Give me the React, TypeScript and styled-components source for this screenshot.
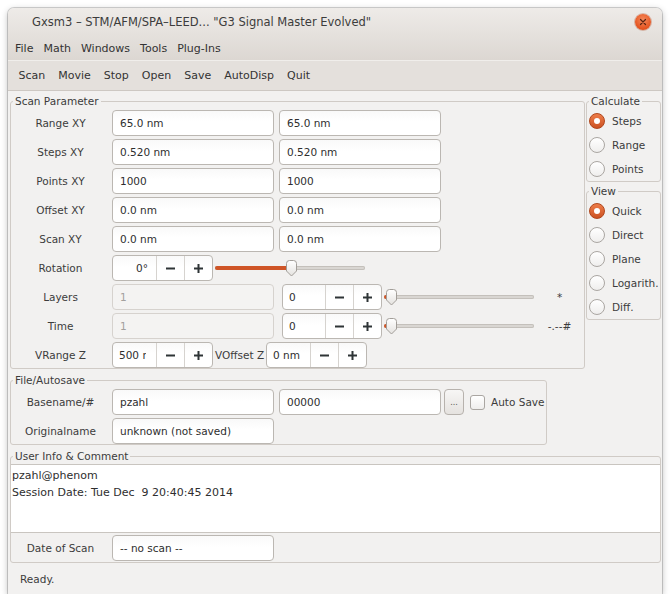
import React from "react";
import styled, { createGlobalStyle } from "styled-components";

const Global = createGlobalStyle`
  html, body { margin: 0; padding: 0; background: #ffffff; }
  body { font-family: "DejaVu Sans", "Liberation Sans", sans-serif; }
  * { box-sizing: border-box; }
`;

const Window = styled.div`
  margin: 8px 0 0 8px;
  width: 654px;
  height: 586px;
  display: flex;
  flex-direction: column;
  background: #f2f1f0;
  border-radius: 6px 6px 0 0;
  box-shadow: 0 0 0 1px rgba(0, 0, 0, 0.16), 0 2px 7px rgba(0, 0, 0, 0.28);
  overflow: hidden;
  color: #3c3c3c;
  font-size: 10.5px;
`;

const Chrome = styled.div`
  background: linear-gradient(to bottom, #eeebe8, #dcd7d2);
`;

const TitleBar = styled.div`
  height: 28px;
  display: flex;
  align-items: center;
  padding: 0 11px 0 24px;
  font-size: 11.5px;
  color: #3c3c3c;
`;

const Title = styled.div`
  flex: 1;
  white-space: pre;
`;

const CloseButton = styled.div`
  width: 16px;
  height: 16px;
  border-radius: 50%;
  background: radial-gradient(circle at 50% 35%, #f58a5c, #e4531f 70%, #cf4514);
  box-shadow: 0 0 0 1px rgba(170, 60, 20, 0.3);
  display: flex;
  align-items: center;
  justify-content: center;
`;

const MenuBar = styled.div`
  height: 24px;
  display: flex;
  align-items: center;
  padding-left: 2px;
  font-size: 11px;
  color: #333;
`;

const MenuItem = styled.div`
  padding: 0 5px;
`;

const ToolBar = styled.div`
  height: 31px;
  display: flex;
  align-items: center;
  padding-left: 4px;
  font-size: 11px;
  color: #333;
  background: #e4e0dc;
  border-top: 1px solid #f0eeeb;
  border-bottom: 1px solid #cdc8c3;
`;

const ToolItem = styled.div`
  padding: 0 6.5px;
`;

const Main = styled.div`
  display: grid;
  grid-template-columns: 575px 75px;
  column-gap: 1px;
  row-gap: 4px;
  align-content: start;
  padding: 3px 1px 0 2px;
`;

const Frame = styled.fieldset<{ $w?: number; $span?: boolean }>`
  margin: 0;
  padding: 0;
  min-width: 0;
  border: 1px solid #d0cbc6;
  border-radius: 3px;
  ${(p) => (p.$w ? `width: ${p.$w}px; justify-self: start;` : "")}
  ${(p) => (p.$span ? "grid-column: 1 / span 2;" : "")}
`;

const Legend = styled.legend`
  padding: 0 2px;
  margin-left: 2px;
  line-height: 14px;
  font-size: 10.5px;
  color: #3c3c3c;
`;

const Rows = styled.div<{ $gap: number; $pt: number; $pb?: number }>`
  display: flex;
  flex-direction: column;
  gap: ${(p) => p.$gap}px;
  padding-top: ${(p) => p.$pt}px;
  padding-bottom: ${(p) => p.$pb ?? 0}px;
`;

const Row = styled.div`
  height: 26px;
  display: flex;
  align-items: center;
  gap: 2px;
`;

const Label = styled.div`
  width: 99px;
  flex: none;
  text-align: center;
  white-space: nowrap;
`;

const Fields = styled.div<{ $gap: number }>`
  display: flex;
  align-items: center;
  gap: ${(p) => p.$gap}px;
`;

const Entry = styled.div<{ $w: number; $disabled?: boolean }>`
  width: ${(p) => p.$w}px;
  height: 26px;
  flex: none;
  border: 1px solid ${(p) => (p.$disabled ? "#d6d2ce" : "#bbb7b2")};
  border-radius: 4px;
  background: ${(p) => (p.$disabled ? "#f4f3f2" : "linear-gradient(#f9f9f9, #ffffff 45%)")};
  color: ${(p) => (p.$disabled ? "#a3a09d" : "#2e2e2e")};
  padding: 0 7px;
  display: flex;
  align-items: center;
  white-space: pre;
  overflow: hidden;
`;

const Spin = styled.div<{ $w: number }>`
  width: ${(p) => p.$w}px;
  height: 26px;
  flex: none;
  display: flex;
  border: 1px solid #bbb7b2;
  border-radius: 4px;
  overflow: hidden;
  background: linear-gradient(#f9f9f9, #ffffff 45%);
  color: #2e2e2e;
`;

const SpinValue = styled.div<{ $right?: boolean }>`
  flex: 1;
  min-width: 0;
  margin: ${(p) => (p.$right ? "0 8px 0 6px" : "0 10px 0 6px")};
  overflow: hidden;
  white-space: nowrap;
  display: flex;
  align-items: center;
  justify-content: ${(p) => (p.$right ? "flex-end" : "flex-start")};
`;

const SpinButton = styled.div`
  width: 28px;
  flex: none;
  border-left: 1px solid #d6d3cf;
  display: flex;
  align-items: center;
  justify-content: center;
`;

const SliderBox = styled.div<{ $w: number }>`
  position: relative;
  width: ${(p) => p.$w}px;
  height: 26px;
  flex: none;
  display: flex;
  align-items: center;
`;

const Track = styled.div`
  width: 100%;
  height: 4px;
  border-radius: 2px;
  background: #d9d6d2;
  box-shadow: inset 0 0 0 1px #c4c0bb;
  display: flex;
`;

const TrackFill = styled.div`
  height: 4px;
  border-radius: 2px;
  background: #cf5527;
`;

const Thumb = styled.svg`
  position: absolute;
  top: 5px;
`;

const Marker = styled.div`
  width: 47px;
  text-align: center;
  white-space: pre;
`;

const InlineLabel = styled.div`
  white-space: nowrap;
`;

const Side = styled.div`
  display: flex;
  flex-direction: column;
  gap: 2px;
`;

const RadioRow = styled.div`
  height: 24px;
  display: flex;
  align-items: center;
  gap: 7px;
  padding-left: 2px;
  white-space: nowrap;
`;

const RadioDot = styled.span<{ $on?: boolean }>`
  width: 16px;
  height: 16px;
  flex: none;
  border-radius: 50%;
  border: 1px solid ${(p) => (p.$on ? "#b0461c" : "#aaa6a2")};
  background: ${(p) => (p.$on ? "linear-gradient(#ee7d4a, #cc5222)" : "linear-gradient(#ffffff, #efeeed)")};
  display: flex;
  align-items: center;
  justify-content: center;
  &::after {
    content: "";
    width: 6px;
    height: 6px;
    border-radius: 50%;
    background: #ffffff;
    display: ${(p) => (p.$on ? "block" : "none")};
  }
`;

const BrowseButton = styled.div`
  width: 20px;
  height: 26px;
  flex: none;
  border: 1px solid #b7b2ad;
  border-radius: 4px;
  background: linear-gradient(#f7f6f5, #e5e2df);
  display: flex;
  align-items: flex-end;
  justify-content: center;
  padding-bottom: 7px;
  font-size: 8px;
  color: #555;
`;

const CheckBox = styled.span`
  width: 15px;
  height: 15px;
  flex: none;
  border: 1px solid #aaa6a2;
  border-radius: 3px;
  background: linear-gradient(#ffffff, #efeeed);
`;

const TextArea = styled.div`
  height: 69px;
  background: #ffffff;
  border-top: 1px solid #c9c5c0;
  border-bottom: 1px solid #c9c5c0;
  padding: 2px 1px;
  font-size: 11px;
  line-height: 17px;
  color: #2e2e2e;
  white-space: pre;
`;

const StatusBar = styled.div`
  height: 30px;
  margin-top: auto;
  display: flex;
  align-items: center;
  padding: 0 0 1px 12px;
`;

const Minus = () => (
  <svg width="9" height="9" viewBox="0 0 9 9">
    <rect x="0" y="3.5" width="9" height="2" fill="#2e3436" />
  </svg>
);

const Plus = () => (
  <svg width="9" height="9" viewBox="0 0 9 9">
    <rect x="0" y="3.5" width="9" height="2" fill="#2e3436" />
    <rect x="3.5" y="0" width="2" height="9" fill="#2e3436" />
  </svg>
);

const SpinBox = ({ w, value, right }: { w: number; value: string; right?: boolean }) => (
  <Spin $w={w}>
    <SpinValue $right={right}>{value}</SpinValue>
    <SpinButton>
      <Minus />
    </SpinButton>
    <SpinButton>
      <Plus />
    </SpinButton>
  </Spin>
);

const Slider = ({ w, pos }: { w: number; pos: number }) => (
  <SliderBox $w={w}>
    <Track>
      <TrackFill style={{ width: pos }} />
    </Track>
    <Thumb width="13" height="17" viewBox="0 0 13 17" style={{ left: pos - 6.5 }}>
      <defs>
        <linearGradient id="knobGrad" x1="0" y1="0" x2="0" y2="1">
          <stop offset="0" stopColor="#ffffff" />
          <stop offset="1" stopColor="#e4e2df" />
        </linearGradient>
      </defs>
      <path
        d="M1.5 3.5 Q1.5 0.5 4.5 0.5 H8.5 Q11.5 0.5 11.5 3.5 V11 L6.5 16 L1.5 11 Z"
        fill="url(#knobGrad)"
        stroke="#a29e99"
      />
    </Thumb>
  </SliderBox>
);

const Radio = ({ on, label }: { on?: boolean; label: string }) => (
  <RadioRow>
    <RadioDot $on={on} />
    {label}
  </RadioRow>
);

const pairs: [string, string][] = [
  ["Range XY", "65.0 nm"],
  ["Steps XY", "0.520 nm"],
  ["Points XY", "1000"],
  ["Offset XY", "0.0 nm"],
  ["Scan XY", "0.0 nm"],
];

export default function App() {
  return (
    <>
      <Global />
      <Window>
        <Chrome>
          <TitleBar>
            <Title>Gxsm3 – STM/AFM/SPA–LEED... "G3 Signal Master Evolved"</Title>
            <CloseButton>
              <svg width="8" height="8" viewBox="0 0 8 8">
                <path d="M1.5 1.5 L6.5 6.5 M6.5 1.5 L1.5 6.5" stroke="#5b2413" strokeWidth="1.2" strokeLinecap="round" />
              </svg>
            </CloseButton>
          </TitleBar>
          <MenuBar>
            {["File", "Math", "Windows", "Tools", "Plug-Ins"].map((m) => (
              <MenuItem key={m}>{m}</MenuItem>
            ))}
          </MenuBar>
        </Chrome>
        <ToolBar>
          {["Scan", "Movie", "Stop", "Open", "Save", "AutoDisp", "Quit"].map((t) => (
            <ToolItem key={t}>{t}</ToolItem>
          ))}
        </ToolBar>
        <Main>
          <Frame>
            <Legend>Scan Parameter</Legend>
            <Rows $gap={3} $pt={2}>
              {pairs.map(([label, v]) => (
                <Row key={label}>
                  <Label>{label}</Label>
                  <Fields $gap={5}>
                    <Entry $w={162}>{v}</Entry>
                    <Entry $w={162}>{v}</Entry>
                  </Fields>
                </Row>
              ))}
              <Row>
                <Label>Rotation</Label>
                <SpinBox w={101} value="0°" right />
                <Slider w={150} pos={76} />
              </Row>
              <Row>
                <Label>Layers</Label>
                <Fields $gap={8}>
                  <Entry $w={162} $disabled>
                    1
                  </Entry>
                  <Fields $gap={2}>
                    <SpinBox w={100} value="0" />
                    <Slider w={150} pos={7} />
                  </Fields>
                </Fields>
                <Marker>*</Marker>
              </Row>
              <Row>
                <Label>Time</Label>
                <Fields $gap={8}>
                  <Entry $w={162} $disabled>
                    1
                  </Entry>
                  <Fields $gap={2}>
                    <SpinBox w={100} value="0" />
                    <Slider w={150} pos={7} />
                  </Fields>
                </Fields>
                <Marker>-.--#</Marker>
              </Row>
              <Row>
                <Label>VRange Z</Label>
                <SpinBox w={101} value="500 nm" />
                <InlineLabel>VOffset Z</InlineLabel>
                <SpinBox w={101} value="0 nm" />
              </Row>
            </Rows>
          </Frame>
          <Side>
            <Frame>
              <Legend>Calculate</Legend>
              <Rows $gap={0} $pt={1}>
                <Radio on label="Steps" />
                <Radio label="Range" />
                <Radio label="Points" />
              </Rows>
            </Frame>
            <Frame>
              <Legend>View</Legend>
              <Rows $gap={0} $pt={1}>
                <Radio on label="Quick" />
                <Radio label="Direct" />
                <Radio label="Plane" />
                <Radio label="Logarith." />
                <Radio label="Diff." />
              </Rows>
            </Frame>
          </Side>
          <Frame $w={537}>
            <Legend>File/Autosave</Legend>
            <Rows $gap={3} $pt={2}>
              <Row>
                <Label>Basename/#</Label>
                <Fields $gap={3}>
                  <Fields $gap={5}>
                    <Entry $w={162}>pzahl</Entry>
                    <Entry $w={162}>00000</Entry>
                  </Fields>
                  <Fields $gap={6}>
                    <BrowseButton>...</BrowseButton>
                    <CheckBox />
                    <InlineLabel>Auto Save</InlineLabel>
                  </Fields>
                </Fields>
              </Row>
              <Row>
                <Label>Originalname</Label>
                <Entry $w={162}>unknown (not saved)</Entry>
              </Row>
            </Rows>
          </Frame>
          <Frame $span>
            <Legend>User Info &amp; Comment</Legend>
            <Rows $gap={2} $pt={1} $pb={1}>
              <TextArea>{"pzahl@phenom\nSession Date: Tue Dec  9 20:40:45 2014"}</TextArea>
              <Row>
                <Label>Date of Scan</Label>
                <Entry $w={162}>-- no scan --</Entry>
              </Row>
            </Rows>
          </Frame>
        </Main>
        <StatusBar>Ready.</StatusBar>
      </Window>
    </>
  );
}
